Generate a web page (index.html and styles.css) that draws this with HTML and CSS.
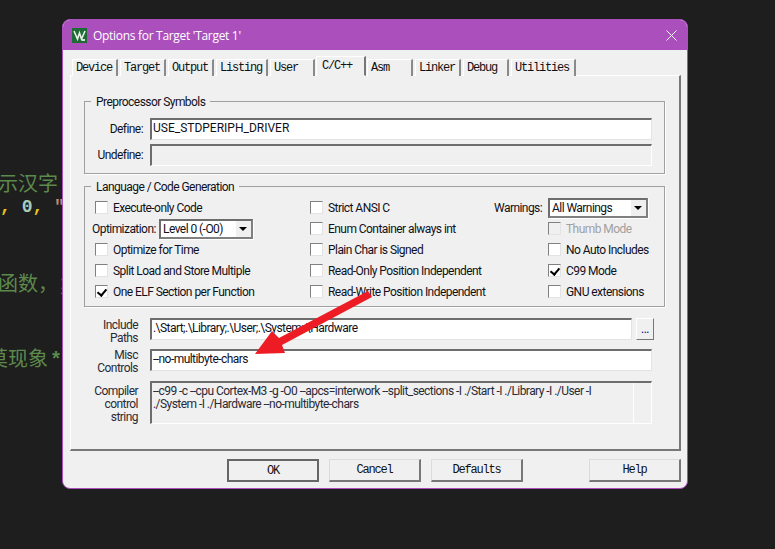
FILE: index.html
```html
<!DOCTYPE html>
<html lang="en">
<head>
    <meta charset="UTF-8">
    <meta name="viewport" content="width=device-width, initial-scale=1.0">
    <title>Options for Target 'Target 1'</title>
    <link rel="stylesheet" href="styles.css">
</head>
<body>
    <div class="editor">
        <div class="code-line green shift-a">显示汉字</div>
        <div class="code-line mono"><span class="yellow">,</span> <span class="num">0</span><span class="yellow">,</span> <span class="str">"</span></div>
        <div class="code-line"></div>
        <div class="code-line"></div>
        <div class="code-line green shift-c">函数，；</div>
        <div class="code-line"></div>
        <div class="code-line"></div>
        <div class="code-line green shift-b">莫现象<span class="star">*</span></div>
    </div>

    <div class="dialog">
        <div class="titlebar">
            <svg class="app-icon" width="15" height="15" viewBox="0 0 15 15">
                <rect width="15" height="15" fill="#1f6b35"/>
                <path d="M2 3 L5.5 11 L7.5 5 L9.5 11 L13 3" fill="none" stroke="#e8f2ea" stroke-width="1.6"/>
                <path d="M10 11 h3 v2 h-3z" fill="#cfe3d4"/>
            </svg>
            <span class="title">Options for Target 'Target 1'</span>
            <svg class="close" width="11" height="11" viewBox="0 0 11 11">
                <path d="M0.5 0.5 L10.5 10.5 M10.5 0.5 L0.5 10.5" stroke="#fff" stroke-width="1" fill="none"/>
            </svg>
        </div>

        <div class="content">
            <div class="tabs">
                <div class="tab w46">Device</div>
                <div class="tab w46">Target</div>
                <div class="tab w46">Output</div>
                <div class="tab w52">Listing</div>
                <div class="tab w45">User</div>
                <div class="tab active">C/C++</div>
                <div class="tab w46">Asm</div>
                <div class="tab w46">Linker</div>
                <div class="tab w46">Debug</div>
                <div class="tab w65">Utilities</div>
            </div>

            <div class="panel">
                <fieldset class="group">
                    <legend>Preprocessor Symbols</legend>
                    <div class="symbols">
                        <div class="field-row">
                            <label class="sym-label">Define:</label>
                            <div class="field w502 caps">USE_STDPERIPH_DRIVER</div>
                        </div>
                        <div class="field-row">
                            <label class="sym-label">Undefine:</label>
                            <div class="field w502 disabled"></div>
                        </div>
                    </div>
                </fieldset>

                <fieldset class="group second">
                    <legend>Language / Code Generation</legend>
                    <div class="options">
                        <div class="col col-a">
                            <div class="opt"><span class="box"></span>Execute-only Code</div>
                            <div class="opt select-row">
                                <span class="opt-label">Optimization:</span>
                                <div class="select w94">Level 0 (-O0)<span class="drop"></span></div>
                            </div>
                            <div class="opt"><span class="box"></span>Optimize for Time</div>
                            <div class="opt"><span class="box"></span>Split Load and Store Multiple</div>
                            <div class="opt"><span class="box checked"></span>One ELF Section per Function</div>
                        </div>
                        <div class="col col-b">
                            <div class="opt"><span class="box"></span>Strict ANSI C</div>
                            <div class="opt"><span class="box"></span>Enum Container always int</div>
                            <div class="opt"><span class="box"></span>Plain Char is Signed</div>
                            <div class="opt"><span class="box"></span>Read-Only Position Independent</div>
                            <div class="opt"><span class="box"></span>Read-Write Position Independent</div>
                        </div>
                        <div class="col col-c">
                            <div class="opt select-row">
                                <span class="warn-label">Warnings:</span>
                                <div class="select w100">All Warnings<span class="drop"></span></div>
                            </div>
                            <div class="opt inset off"><span class="box"></span>Thumb Mode</div>
                            <div class="opt inset"><span class="box"></span>No Auto Includes</div>
                            <div class="opt inset"><span class="box checked"></span>C99 Mode</div>
                            <div class="opt inset"><span class="box"></span>GNU extensions</div>
                        </div>
                    </div>
                </fieldset>

                <div class="paths">
                    <div class="path-row">
                        <label class="path-label">Include<br>Paths</label>
                        <div class="field w482">.\Start;.\Library;.\User;.\System;.\Hardware</div>
                        <div class="browse">...</div>
                    </div>
                    <div class="path-row misc-row">
                        <label class="path-label">Misc<br>Controls</label>
                        <div class="field w502">--no-multibyte-chars</div>
                    </div>
                    <div class="path-row compiler-row">
                        <label class="path-label">Compiler<br>control<br>string</label>
                        <div class="field w502 disabled compiler">
                            <div class="compiler-text">--c99 -c --cpu Cortex-M3 -g -O0 --apcs=interwork --split_sections -I ./Start -I ./Library -I ./User -I<br>./System -I ./Hardware --no-multibyte-chars</div>
                            <div class="scroll"></div>
                        </div>
                    </div>
                </div>
            </div>

            <div class="buttons">
                <button class="btn default">OK</button>
                <button class="btn">Cancel</button>
                <button class="btn">Defaults</button>
                <button class="btn help">Help</button>
            </div>
        </div>
    </div>

    <svg class="arrow" width="775" height="549" viewBox="0 0 775 549">
        <polygon points="368,291 372,297 282,345 285,353 255,354 272,331 279,338" fill="#ed1c24"/>
    </svg>
</body>
</html>
```

FILE: styles.css
```css
* {
    box-sizing: border-box;
}
body {
    margin: 0;
    width: 775px;
    height: 549px;
    overflow: hidden;
    display: flex;
    align-items: flex-start;
    background: #1e1e1e;
    font-family: Roboto, "Liberation Sans", sans-serif;
    font-size: 12px;
    font-variant-ligatures: none;
    letter-spacing: -0.55px;
    color: #10101c;
}

/* code editor behind the dialog */
.editor {
    width: 62px;
    padding-top: 170px;
    overflow: hidden;
    flex-shrink: 0;
}
.code-line {
    height: 25px;
    line-height: 25px;
    font-size: 20px;
    white-space: pre;
    letter-spacing: 0;
    font-family: "Noto Sans CJK SC", sans-serif;
    font-feature-settings: "chws" 0;
    text-spacing-trim: space-all;
}
.green {
    color: #5c8a4c;
}
.shift-a {
    margin-left: -22px;
}
.shift-b {
    margin-left: -12px;
}
.shift-c {
    margin-left: -2px;
}
.star {
    margin-left: 2px;
    font-family: "Liberation Mono", monospace;
    font-weight: bold;
}
.mono {
    font-family: "Liberation Mono", monospace;
    font-size: 18px;
    font-weight: bold;
}
.yellow {
    color: #e6c619;
}
.num {
    color: #a8cdbb;
}
.str {
    color: #c08a70;
}

/* dialog */
.dialog {
    width: 626px;
    height: 470px;
    margin-top: 19px;
    flex-shrink: 0;
    border: 1px solid #ab4fbd;
    border-radius: 8px;
    background: #f0f0f0;
    overflow: hidden;
}
.titlebar {
    height: 30px;
    display: flex;
    align-items: center;
    background: #ab4fbd;
    padding: 0 10px 0 9px;
}
.title {
    margin-left: 6px;
    color: #fff;
    font-family: "Open Sans", sans-serif;
    font-size: 12px;
    letter-spacing: -0.3px;
}
.close {
    margin-left: auto;
}
.content {
    padding: 6px 6px 0 7px;
}

/* tabs */
.tabs {
    display: flex;
    align-items: flex-end;
    height: 20px;
    margin-bottom: -1px;
    padding-left: 2px;
    position: relative;
    z-index: 1;
}
.tab {
    height: 17px;
    margin-right: 2px;
    padding-left: 3px;
    background: #f0f0f0;
    border-top: 1px solid #fff;
    border-left: 1px solid #fff;
    border-right: 2px solid #8a8a8a;
    font-family: "Liberation Mono", monospace;
    font-size: 12px;
    letter-spacing: -1.2px;
    line-height: 16px;
    color: #111;
}
.tab.active {
    width: 50px;
    height: 20px;
    margin: 0 1px 0 -1px;
    padding-left: 5px;
    line-height: 18px;
    border-right-color: #777;
    border-bottom: 1px solid #f0f0f0;
}
.w45 { width: 45px; }
.w46 { width: 46px; }
.w52 { width: 52px; }
.w65 { width: 65px; }

.panel {
    width: 611px;
    height: 376px;
    padding: 17px 14px 0 13px;
    border-top: 1px solid #fff;
    border-left: 1px solid #fff;
    border-right: 2px solid #777;
    border-bottom: 2px solid #777;
}

/* group boxes */
.group {
    margin: 0;
    padding: 0;
    border: 1px solid #a0a0a0;
    box-shadow: 1px 1px 0 #fff;
    min-width: 0;
}
.group legend {
    margin-left: 6px;
    padding: 2px 5px 0;
    line-height: 14px;
    font-size: 12px;
}
.group.second {
    margin-top: 4px;
}
.symbols {
    display: flex;
    flex-direction: column;
    gap: 4px;
    margin-top: 9px;
    padding-bottom: 7px;
}
.field-row {
    display: flex;
    align-items: center;
    gap: 7px;
}
.sym-label {
    width: 58px;
    text-align: right;
}

/* sunken edit boxes */
.field {
    height: 22px;
    padding: 1px 0 0 1px;
    background: #fff;
    border-top: 2px solid #6d6d6d;
    border-left: 2px solid #6d6d6d;
    border-right: 1px solid #e3e3e3;
    border-bottom: 1px solid #e3e3e3;
    line-height: 15px;
    white-space: nowrap;
}
.field.disabled {
    background: #f0f0f0;
    border-right-color: #fff;
    border-bottom-color: #fff;
}
.field.caps {
    letter-spacing: 0;
}
.w482 { width: 482px; }
.w502 { width: 502px; }

/* checkbox grid */
.options {
    display: grid;
    grid-template-columns: 215px 184px 1fr;
    margin-top: 3px;
    padding: 0 0 4px 10px;
}
.col {
    display: flex;
    flex-direction: column;
}
.opt {
    display: flex;
    align-items: center;
    height: 21px;
    white-space: nowrap;
}
.box {
    width: 13px;
    height: 13px;
    margin-right: 5px;
    flex-shrink: 0;
    background: #fff;
    border-top: 1px solid #808080;
    border-left: 1px solid #808080;
    border-right: 1px solid #e3e3e3;
    border-bottom: 1px solid #e3e3e3;
    position: relative;
}
.box.checked::after {
    content: "";
    position: absolute;
    left: 3px;
    top: 1px;
    width: 4px;
    height: 7px;
    border-right: 2px solid #000;
    border-bottom: 2px solid #000;
    transform: rotate(40deg);
}
.inset {
    padding-left: 54px;
}
.off {
    color: #a0a0a0;
}
.off .box {
    background: #f0f0f0;
}
.opt-label {
    margin-left: -3px;
    width: 67px;
}
.warn-label {
    width: 54px;
}
.select {
    height: 20px;
    padding: 1px 0 0 2px;
    display: flex;
    justify-content: space-between;
    background: #fff;
    border: 2px solid #6d6d6d;
    border-right-color: #808080;
    border-bottom-color: #808080;
    line-height: 14px;
    box-shadow: 1px 1px 0 #fff;
}
.w94 { width: 94px; }
.w100 { width: 100px; }
.drop {
    width: 16px;
    margin: -1px 0 0;
    background: #f0f0f0;
    border-left: 1px solid #fff;
    position: relative;
}
.drop::after {
    content: "";
    position: absolute;
    left: 3px;
    top: 6px;
    border-left: 4px solid transparent;
    border-right: 4px solid transparent;
    border-top: 4px solid #000;
}

/* include / misc / compiler rows */
.paths {
    display: flex;
    flex-direction: column;
    gap: 9px;
    margin-top: 11px;
}
.path-row {
    display: flex;
    gap: 12px;
    align-items: flex-start;
    height: 22px;
}
.compiler-row {
    height: 43px;
    margin-top: 1px;
}
.path-label {
    width: 54px;
    margin-top: 1px;
    line-height: 13px;
    text-align: right;
    color: #2a2a36;
}
.misc-row .path-label {
    margin-top: 0;
}
.compiler-row .path-label {
    margin-top: 4px;
}
.browse {
    width: 18px;
    height: 22px;
    margin-left: -8px;
    text-align: center;
    line-height: 20px;
    background: #f0f0f0;
    border: 1px solid #fff;
    border-right: 1px solid #777;
    border-bottom: 1px solid #777;
    color: #00007f;
}
.compiler {
    display: flex;
    height: 43px;
    padding: 0;
    white-space: normal;
    line-height: 13px;
}
.compiler-text {
    width: 482px;
    padding: 2px 0 0 1px;
    white-space: nowrap;
    color: #2a2a36;
}
.scroll {
    width: 18px;
    border-left: 1px solid #fff;
}

/* bottom buttons */
.buttons {
    display: flex;
    gap: 10px;
    margin-top: 8px;
    padding-left: 157px;
}
.btn {
    width: 92px;
    height: 23px;
    padding: 0;
    background: #f0f0f0;
    border-top: 1px solid #dcdcdc;
    border-left: 1px solid #dcdcdc;
    border-right: 2px solid #777;
    border-bottom: 2px solid #777;
    border-radius: 0;
    font-family: "Liberation Mono", monospace;
    font-size: 12px;
    letter-spacing: -1.2px;
    color: #111;
}
.btn.default {
    border: 2px solid #666;
}
.btn.help {
    margin-left: 56px;
}

/* red annotation arrow drawn over the screenshot */
.arrow {
    position: absolute;
    left: 0;
    top: 0;
}
```
